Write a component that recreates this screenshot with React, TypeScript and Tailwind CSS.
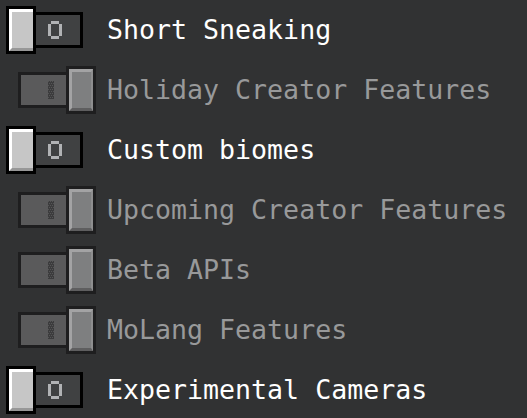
const rows = [
  { label: "Short Sneaking", on: false, disabled: false },
  { label: "Holiday Creator Features", on: true, disabled: true },
  { label: "Custom biomes", on: false, disabled: false },
  { label: "Upcoming Creator Features", on: true, disabled: true },
  { label: "Beta APIs", on: true, disabled: true },
  { label: "MoLang Features", on: true, disabled: true },
  { label: "Experimental Cameras", on: false, disabled: false },
];

function OffToggle() {
  return (
    <div className="flex items-center pl-[6px]">
      <div className="relative z-10 w-[30px] h-[48px] border-[3px] border-black bg-black">
        <div className="h-full bg-[#c6c6c6] border-t-[3px] border-l-[3px] border-b-[3px] border-t-white border-l-white border-b-[#979797]" />
      </div>
      <div className="-ml-[3px] w-[50px] h-[36px] border-[3px] border-black bg-[#404142] flex items-center pl-[12px]">
        <svg width="14" height="18" viewBox="0 0 14 18" className="block">
          <path d="M3 0h8v3h3v12h-3v3H3v-3H0V3h3zM3 3v12h8V3z" fill="#b1b2b4" fillRule="evenodd" />
        </svg>
      </div>
    </div>
  );
}

function OnDisabledToggle() {
  return (
    <div className="flex items-center pl-[18px]">
      <div className="w-[51px] h-[36px] border-[3px] border-[#1e1e1f] bg-[#5a5a5b] flex items-center justify-end pr-[12px]">
        <svg width="6" height="18" viewBox="0 0 6 18" className="block">
          <rect width="6" height="18" fill="#3c3c3d" />
          <path d="M0 0h1v1H0zM2 0h1v1H2zM4 0h1v1H4zM1 2h1v1H1zM3 2h1v1H3zM5 2h1v1H5zM0 4h1v1H0zM2 4h1v1H2zM4 4h1v1H4zM1 6h1v1H1zM3 6h1v1H3zM5 6h1v1H5zM0 8h1v1H0zM2 8h1v1H2zM4 8h1v1H4zM1 10h1v1H1zM3 10h1v1H3zM5 10h1v1H5zM0 12h1v1H0zM2 12h1v1H2zM4 12h1v1H4zM1 14h1v1H1zM3 14h1v1H3zM5 14h1v1H5zM0 16h1v1H0zM2 16h1v1H2zM4 16h1v1H4z" fill="#555556" />
        </svg>
      </div>
      <div className="-ml-[3px] w-[30px] h-[48px] border-[3px] border-[#1e1e1f] bg-[#1e1e1f]">
        <div className="h-full bg-[#7e7f80] border-t-[3px] border-l-[3px] border-r-[2px] border-b-[3px] border-t-[#a3a3a4] border-l-[#a3a3a4] border-r-[#8e8e8f] border-b-[#5e5e5f]" />
      </div>
    </div>
  );
}

export default function App() {
  return (
    <div className="w-[527px] h-[418px] bg-[#313233] overflow-hidden">
      {rows.map((r) => (
        <div key={r.label} className="flex items-center h-[60px]">
          <div className="w-[107px] shrink-0">
            {r.on ? <OnDisabledToggle /> : <OffToggle />}
          </div>
          <span
            className={
              "whitespace-nowrap text-[26.6px] leading-none font-['DejaVu_Sans_Mono',monospace] " +
              (r.disabled ? "text-[#98999a]" : "text-white")
            }
          >
            {r.label}
          </span>
        </div>
      ))}
    </div>
  );
}
